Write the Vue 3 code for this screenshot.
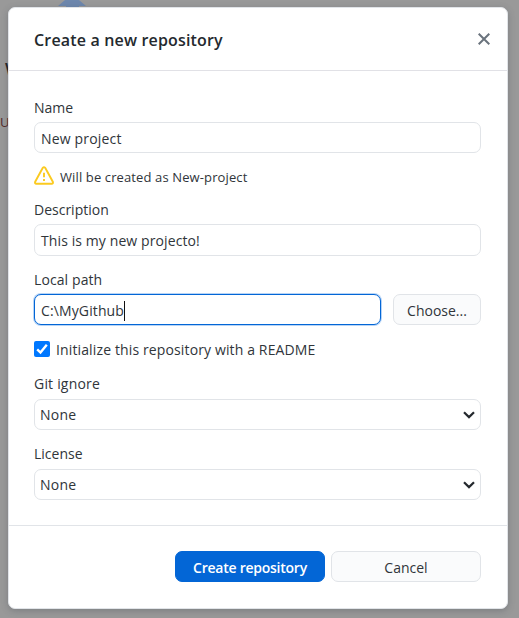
<script setup>
import { ref } from 'vue'

const name = ref('New project')
const description = ref('This is my new projecto!')
const localPath = ref('C:\\MyGithub')
</script>

<template>
  <div class="screen">
    <div class="behind" aria-hidden="true">
      <svg class="arrow" width="34" height="10" viewBox="0 0 34 10"><path d="M11 0 4 6H12V10H25V6H32L25 0Z" /></svg>
      <span class="behind-w">W</span>
      <span class="behind-u">U</span>
    </div>
    <section class="dialog" role="dialog">
      <header class="header">
        <h1><span class="t-title">Create a new repository</span></h1>
        <svg class="close" width="12" height="12" viewBox="0 0 12 12"><path d="M.7.7 11.3 11.3M11.3.7.7 11.3" /></svg>
      </header>
      <div class="body">
        <label class="label t-name">Name</label>
        <div class="input"><span class="t-project">{{ name }}</span></div>
        <div class="warning">
          <svg width="20" height="20" viewBox="0 0 20 20">
            <path class="tri" d="M8.8 1.9Q10 .4 11.2 1.9L18.8 15.7Q19.5 17.6 17.6 17.8H2.4Q.5 17.6 1.2 15.7Z" />
            <path class="mark" d="M10 6.7V11.3M10 13V15" />
          </svg>
          <span class="t-warning">Will be created as New-project</span>
        </div>
        <label class="label t-description">Description</label>
        <div class="input tall"><span class="t-this">{{ description }}</span></div>
        <label class="label path-label t-local">Local path</label>
        <div class="path-row">
          <div class="input focused"><span class="t-path">{{ localPath }}</span><i class="caret"></i></div>
          <button class="button choose"><span class="t-choose">Choose...</span></button>
        </div>
        <div class="check-row">
          <span class="checkbox"><svg width="16" height="16" viewBox="0 0 16 16"><path d="M3.2 8.3 6.5 11.5 12.8 3.8" /></svg></span>
          <span class="t-init">Initialize this repository with a README</span>
        </div>
        <label class="label t-git">Git ignore</label>
        <div class="input select"><span class="t-none">None</span><svg width="12" height="8" viewBox="0 0 12 8"><path d="M1 1.2 6 6.1 11 1.2" /></svg></div>
        <label class="label license-label t-license">License</label>
        <div class="input select"><span class="t-none">None</span><svg width="12" height="8" viewBox="0 0 12 8"><path d="M1 1.2 6 6.1 11 1.2" /></svg></div>
      </div>
      <footer class="footer">
        <button class="button primary"><span class="t-create">Create repository</span></button>
        <button class="button"><span class="t-cancel">Cancel</span></button>
      </footer>
    </section>
  </div>
</template>

<style>
body { margin: 0; overflow: hidden; background: #999; }
</style>

<style scoped>
* { box-sizing: border-box; }
.screen {
  position: relative;
  height: 618px;
  padding: 7px 11px 0 8px;
  overflow: hidden;
  background: #999;
  color: #30353a;
  font: 14px/20px "Open Sans", "Noto Sans", sans-serif;
}
.behind { position: absolute; inset: 0; }
.arrow { position: absolute; left: 54px; top: 0; fill: #6d87ad; }
.behind-w { position: absolute; left: 5px; top: 59px; font-size: 17px; font-weight: 600; color: #202326; }
.behind-u { position: absolute; left: 0; top: 112px; font-size: 13px; color: #542c2c; }
.dialog {
  position: relative;
  height: 602px;
  background: #fff;
  border: 1px solid #e1e4e8;
  border-radius: 7px;
  box-shadow: 0 2px 7px rgba(60, 65, 75, .3);
}
.header {
  display: flex;
  align-items: center;
  justify-content: space-between;
  height: 63px;
  padding: 0 17px 0 25px;
  border-bottom: 1px solid #e1e1e6;
}
h1 { margin: 2px 0 0; color: #24292e; font-size: 16px; line-height: 22px; font-weight: 600; }
.close { fill: none; stroke: #6a737d; stroke-width: 2; }
.body { padding: 27px 26px 0 25px; height: 454px; }
.label { display: block; height: 20px; margin-bottom: 4px; white-space: nowrap; }
.input {
  display: flex;
  align-items: center;
  height: 31px;
  padding: 2px 6px 0;
  border: 1px solid #e1e4e8;
  border-radius: 7px;
  background: #fff;
}
.tall { height: 32px; }
.warning {
  display: flex;
  align-items: center;
  gap: 6px;
  height: 20px;
  margin: 13px 0 14px;
  font-size: 13px;
}
.warning svg { fill: none; stroke: #fbca20; stroke-width: 1.9; }
.warning span { padding-top: 2px; }
.path-label { margin-top: 14px; }
.path-row { display: flex; gap: 12px; }
.focused { flex: 1; border-color: #0366d6; box-shadow: 0 0 0 1px #b7d4f6; }
.caret { width: 1px; height: 20px; background: #111; }
.button {
  display: flex;
  align-items: center;
  justify-content: center;
  height: 31px;
  padding: 2px 0 0;
  border: 1px solid #e1e4e8;
  border-radius: 7px;
  background: #fafbfc;
  color: inherit;
  font: inherit;
}
.choose { width: 88px; }
.check-row { display: flex; align-items: center; gap: 6px; height: 20px; margin: 14px 0 15px; }
.check-row .t-init { padding-top: 2px; }
.checkbox { width: 16px; height: 16px; border-radius: 2px; background: #0078ff; }
.checkbox svg { display: block; fill: none; stroke: #fff; stroke-width: 2.4; }
.t-git, .license-label { margin-bottom: 5px; }
.select { justify-content: space-between; padding: 1px 5px 0; }
.select svg { fill: none; stroke: #24292e; stroke-width: 2.2; }
.license-label { margin-top: 14px; }
.footer {
  display: grid;
  grid-template-columns: 150px 150px;
  justify-content: end;
  gap: 6px;
  padding: 25px 26px 0 0;
  border-top: 1px solid #e1e4e8;
}
.primary { background: #0366d6; border-color: #0366d6; color: #fff; font-weight: 600; }
span[class^="t-"] { white-space: nowrap; }
.t-title { letter-spacing: .17px; }
.t-project { letter-spacing: .18px; }
.t-warning { letter-spacing: .12px; }
.t-this { letter-spacing: .1px; }
.t-path { letter-spacing: .12px; }
.t-local { letter-spacing: .1px; }
.t-init { letter-spacing: .13px; }
.t-git { letter-spacing: .2px; }
.t-none { letter-spacing: .25px; }
.t-create { letter-spacing: -.25px; }
</style>
